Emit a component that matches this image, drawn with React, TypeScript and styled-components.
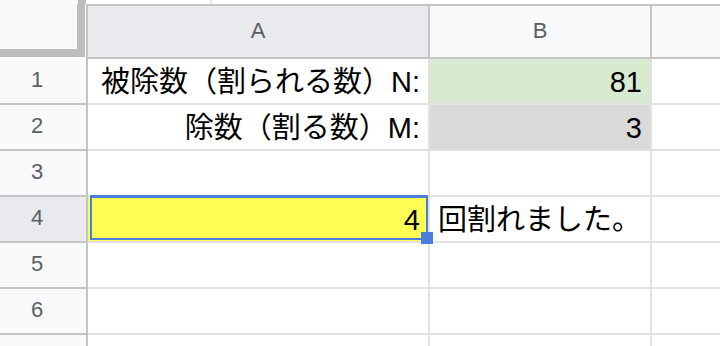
import React from "react";
import styled, { createGlobalStyle, css } from "styled-components";

const GlobalStyle = createGlobalStyle`
  html, body {
    margin: 0;
    padding: 0;
    background: #ffffff;
    overflow: hidden;
  }
  body {
    width: 720px;
    height: 346px;
  }
`;

const HEADER_BORDER = "#c4c4c4";
const GRID_LINE = "#e2e2e2";
const FREEZE_BAR = "#bdbdbd";

const Sheet = styled.div`
  width: 720px;
  height: 346px;
  overflow: hidden;
  font-family: "Liberation Sans", Arial, "Noto Sans CJK JP", sans-serif;
`;

/* strip left over from the formula bar above the grid */
const TopStrip = styled.div`
  display: flex;
  height: 4px;
  border-bottom: 2px solid ${HEADER_BORDER};
`;

const StripCorner = styled.div`
  width: 78px;
  background: #f8f9fa;
`;

const StripBar = styled.div`
  width: 8px;
  background: ${FREEZE_BAR};
`;

const StripGap = styled.div<{ $w: number }>`
  width: ${(p) => p.$w}px;
  background: #ffffff;
  border-right: 2px solid #e6e6e6;
`;

const Grid = styled.div`
  display: grid;
  grid-template-columns: 88px 342px 222px 1fr;
  grid-template-rows: 53px repeat(7, 46px);
`;

const CornerCell = styled.div`
  background: #ffffff;
  border-right: 2px solid ${HEADER_BORDER};
  box-sizing: border-box;
  display: flex;
  margin-top: -2px;
`;

const CornerFill = styled.div`
  width: 78px;
  height: 45px;
  background: #f8f9fa;
  border-right: 8px solid ${FREEZE_BAR};
  border-bottom: 8px solid ${FREEZE_BAR};
  margin-right: 1px;
`;

const ColHeader = styled.div<{ $active?: boolean; $last?: boolean }>`
  box-sizing: border-box;
  display: flex;
  align-items: center;
  justify-content: center;
  background: ${(p) => (p.$active ? "#e8eaed" : "#f8f9fa")};
  border-bottom: 2px solid ${HEADER_BORDER};
  border-right: ${(p) => (p.$last ? "none" : `2px solid ${HEADER_BORDER}`)};
  color: #5c5f63;
  font-size: 22px;
  padding-bottom: 2px;
`;

const RowHeader = styled.div<{ $active?: boolean }>`
  box-sizing: border-box;
  display: flex;
  align-items: center;
  justify-content: center;
  padding-right: 12px;
  padding-bottom: 3px;
  background: ${(p) => (p.$active ? "#e8eaed" : "#f8f9fa")};
  border-right: 2px solid ${HEADER_BORDER};
  border-bottom: 2px solid ${HEADER_BORDER};
  color: #5c5f63;
  font-size: 22px;
`;

type Fill = "none" | "green" | "gray" | "yellow";

const fills: Record<Fill, string> = {
  none: "#ffffff",
  green: "#d9ead3",
  gray: "#d9d9d9",
  yellow: "#fffd54",
};

const Cell = styled.div<{ $fill?: Fill; $align?: "left" | "right"; $last?: boolean }>`
  position: relative;
  box-sizing: border-box;
  display: flex;
  align-items: flex-end;
  justify-content: ${(p) => (p.$align === "right" ? "flex-end" : "flex-start")};
  padding: 0 8px 6px 8px;
  background: ${(p) => fills[p.$fill ?? "none"]};
  border-bottom: 2px solid ${GRID_LINE};
  ${(p) =>
    p.$last
      ? css`
          border-right: none;
        `
      : css`
          border-right: 2px solid ${GRID_LINE};
        `}
  color: #000000;
  font-size: 29px;
  line-height: 29px;
  white-space: nowrap;
  overflow: visible;
`;

const CellText = styled.span`
  position: relative;
  z-index: 1;
`;

const SelectionFrame = styled.div`
  position: absolute;
  left: 2px;
  top: -2px;
  right: 0;
  bottom: 1px;
  border: 2px solid #4a7fdc;
  border-top-width: 3px;
  pointer-events: none;
`;

const FillHandle = styled.div`
  position: absolute;
  right: -5px;
  bottom: -3px;
  width: 12px;
  height: 12px;
  background: #4a7fdc;
  z-index: 2;
`;

type RowData = {
  a?: React.ReactNode;
  b?: React.ReactNode;
  bFill?: Fill;
  bAlign?: "left" | "right";
  selected?: boolean;
};

const rows: RowData[] = [
  { a: "被除数（割られる数）N:", b: "81", bFill: "green", bAlign: "right" },
  { a: "除数（割る数）M:", b: "3", bFill: "gray", bAlign: "right" },
  {},
  { a: "4", b: "回割れました。", bAlign: "left", selected: true },
  {},
  {},
];

export default function App() {
  return (
    <Sheet>
      <GlobalStyle />
      <TopStrip>
        <StripCorner />
        <StripBar />
        <StripGap $w={124} />
      </TopStrip>
      <Grid>
        <CornerCell>
          <CornerFill />
        </CornerCell>
        <ColHeader $active>A</ColHeader>
        <ColHeader>B</ColHeader>
        <ColHeader $last />
        {rows.map((r, i) => (
          <React.Fragment key={i}>
            <RowHeader $active={r.selected}>{i + 1}</RowHeader>
            <Cell $align="right" $fill={r.selected ? "yellow" : "none"}>
              {r.a != null && <CellText>{r.a}</CellText>}
              {r.selected && (
                <>
                  <SelectionFrame />
                  <FillHandle />
                </>
              )}
            </Cell>
            <Cell $align={r.bAlign ?? "left"} $fill={r.bFill ?? "none"}>
              {r.b != null && <CellText>{r.b}</CellText>}
            </Cell>
            <Cell $last />
          </React.Fragment>
        ))}
        {/* the next row only peeks in at the bottom edge */}
        <RowHeader />
        <Cell />
        <Cell />
        <Cell $last />
      </Grid>
    </Sheet>
  );
}
